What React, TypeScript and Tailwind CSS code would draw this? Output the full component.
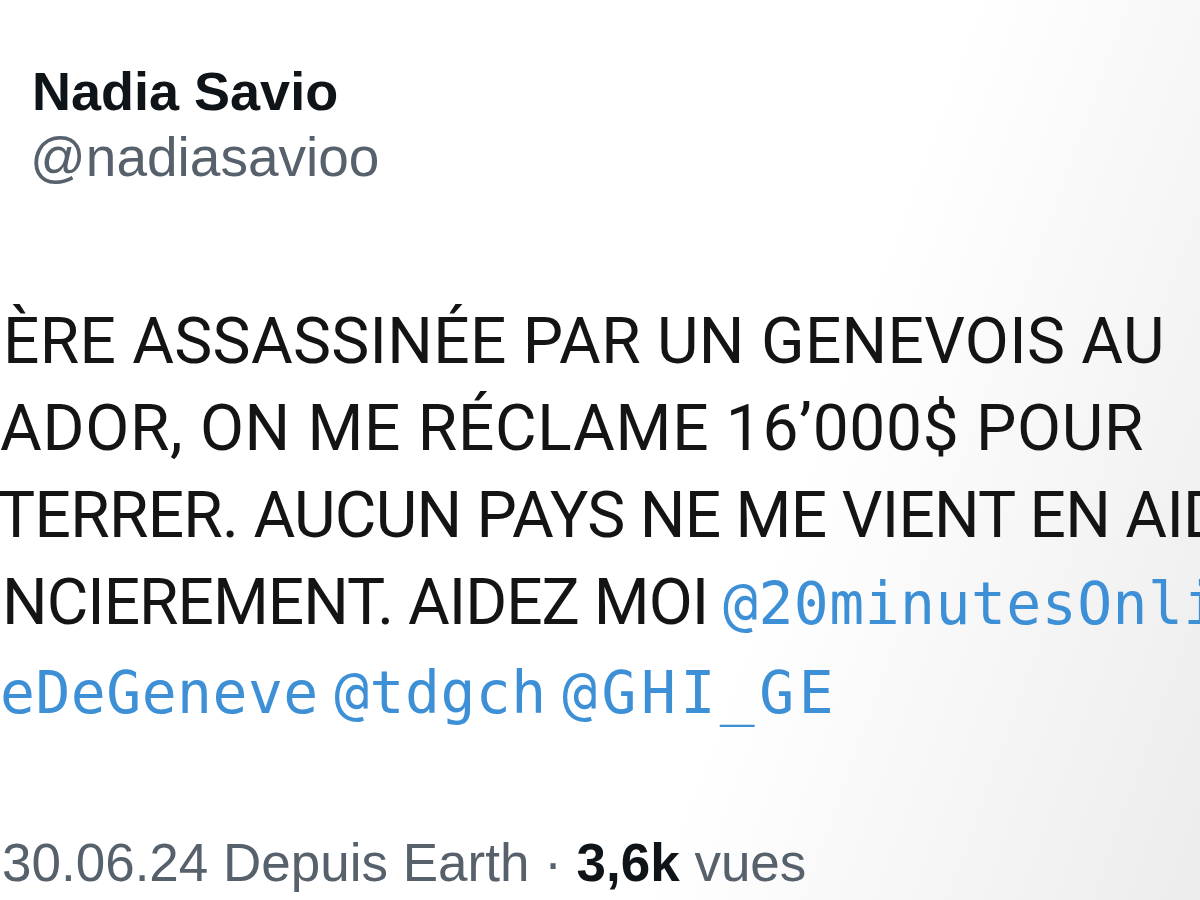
type Part = { t: string; link?: boolean; wide?: boolean }

const lines: { cls: string; parts: Part[] }[] = [
  { cls: "ml-[3px] tracking-[0.3px]", parts: [{ t: "ÈRE ASSASSINÉE PAR UN GENEVOIS AU" }] },
  { cls: "ml-[0px] tracking-[0.7px]", parts: [{ t: "ADOR, ON ME RÉCLAME 16’000$ POUR" }] },
  { cls: "ml-[-3px] tracking-[-0.7px]", parts: [{ t: "TERRER. AUCUN PAYS NE ME VIENT EN AIDE" }] },
  {
    cls: "ml-[2px] tracking-[-1px]",
    parts: [{ t: "NCIEREMENT. AIDEZ MOI " }, { t: "@20minutesOnline", link: true }],
  },
  {
    cls: "ml-[0px]",
    parts: [
      { t: "eDeGeneve @tdgch ", link: true },
      { t: "@GHI_GE", link: true, wide: true },
    ],
  },
]

export default function App() {
  return (
    <div className="w-[1200px] h-[900px] overflow-hidden bg-[linear-gradient(110deg,#ffffff_64%,#ececec)] font-['Liberation_Sans',sans-serif] text-[#0f1419]">
      <div className="pl-[32px] pt-[64px] flex flex-col gap-[12px]">
        <div className="text-[54px] leading-none font-bold">Nadia Savio</div>
        <div className="text-[55px] leading-none text-[#56616b] -ml-[2px]">@nadiasavioo</div>
      </div>

      <div className="mt-[113px] flex flex-col whitespace-nowrap text-[64px] leading-[87px] font-['Roboto',sans-serif] text-[#141414]">
        {lines.map((line, i) => (
          <div key={i} className={line.cls}>
            {line.parts.map((p, j) =>
              p.link ? (
                <span
                  key={j}
                  className={
                    p.wide
                      ? "font-['DejaVu_Sans_Mono',monospace] text-[58px] tracking-[4.5px] text-[#3d8fd6]"
                      : "font-['DejaVu_Sans_Mono',monospace] text-[58px] tracking-[0.5px] [word-spacing:-20px] text-[#3d8fd6]"
                  }
                >
                  {p.t}
                </span>
              ) : (
                <span key={j}>{p.t}</span>
              )
            )}
          </div>
        ))}
      </div>

      <div className="mt-[99px] ml-[2px] whitespace-nowrap text-[53px] leading-none text-[#56616b]">
        30.06.24 Depuis Earth · <span className="font-bold text-[#0f1419]">3,6k</span> vues
      </div>
    </div>
  )
}
